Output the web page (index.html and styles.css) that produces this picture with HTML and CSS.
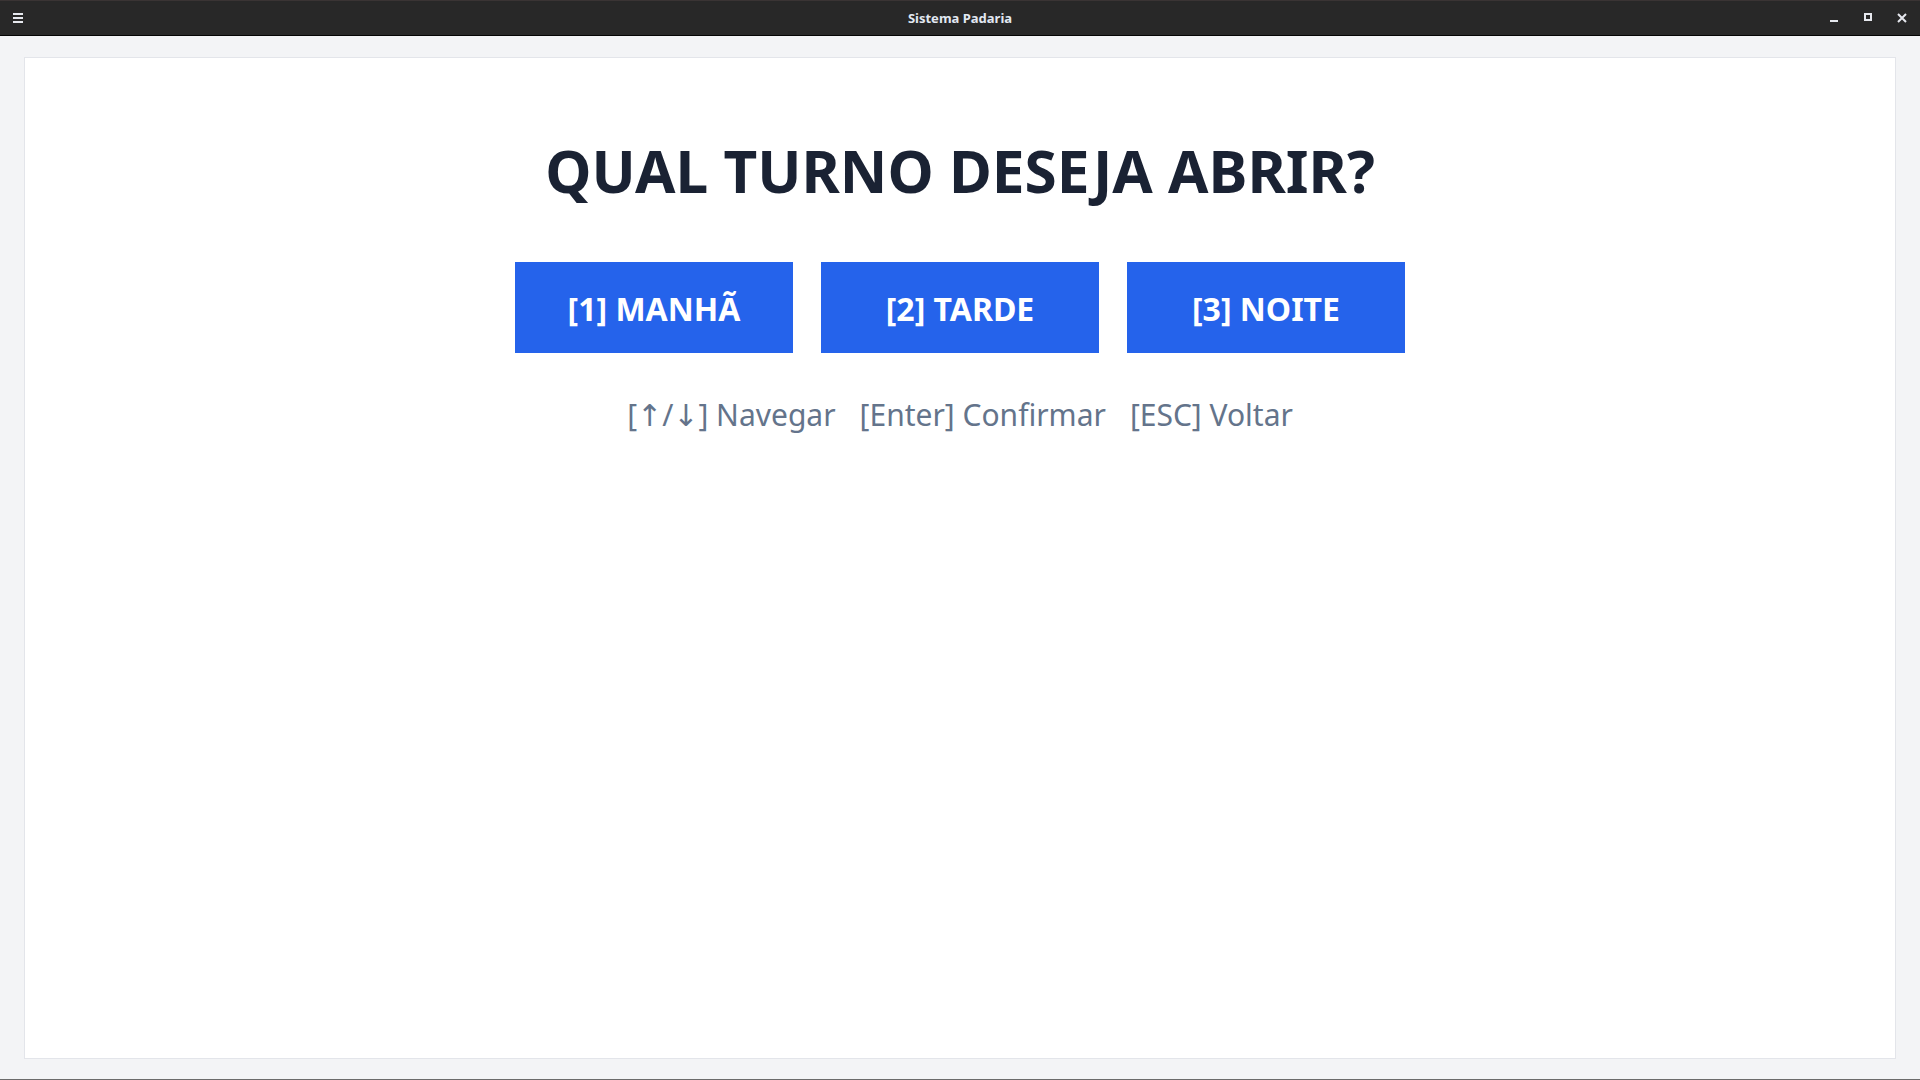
FILE: index.html
```html
<!DOCTYPE html>
<html lang="pt-BR">
<head>
<meta charset="utf-8">
<title>Sistema Padaria</title>
<link rel="stylesheet" href="styles.css">
</head>
<body>
<div class="window">
  <header class="titlebar">
    <div class="tb-left">
      <svg class="menu-icon" width="12" height="12" viewBox="0 0 12 12">
        <rect x="1" y="1" width="10" height="2" fill="#e6e8ee"/>
        <rect x="1" y="5" width="10" height="2" fill="#e6e8ee"/>
        <rect x="1" y="9" width="10" height="2" fill="#e6e8ee"/>
      </svg>
    </div>
    <div class="tb-title">Sistema Padaria</div>
    <div class="tb-right">
      <svg class="ctl" width="10" height="10" viewBox="0 0 10 10"><rect x="1" y="7" width="8" height="2" fill="#e6e8ee"/></svg>
      <svg class="ctl" width="10" height="10" viewBox="0 0 10 10"><rect x="2" y="1" width="6" height="6" fill="none" stroke="#e6e8ee" stroke-width="2"/></svg>
      <svg class="ctl" width="10" height="10" viewBox="0 0 10 10"><path d="M1 1 L9 9 M9 1 L1 9" stroke="#e6e8ee" stroke-width="2"/></svg>
    </div>
  </header>
  <main class="content">
    <section class="card">
      <h1 class="heading">QUAL TURNO DESEJA ABRIR?</h1>
      <div class="options">
        <button class="option">[1] MANHÃ</button>
        <button class="option">[2] TARDE</button>
        <button class="option">[3] NOITE</button>
      </div>
      <div class="hints">
        <span class="hint">[<span class="arrow">↑</span>/<span class="arrow">↓</span>] Navegar</span>
        <span class="hint">[Enter] Confirmar</span>
        <span class="hint">[ESC] Voltar</span>
      </div>
    </section>
  </main>
</div>
</body>
</html>
```
FILE: styles.css
```css
* { box-sizing: border-box; }
html, body {
  margin: 0;
  padding: 0;
  width: 1920px;
  height: 1080px;
  overflow: hidden;
  font-family: "Noto Sans", "Open Sans", sans-serif;
}
.window {
  display: flex;
  flex-direction: column;
  height: 1080px;
  background: #f3f4f6;
  border-bottom: 1px solid #6b6b6b;
}
.titlebar {
  height: 36px;
  flex: 0 0 36px;
  background: #282828;
  border-top: 1px solid #3a3434;
  border-bottom: 1px solid #050505;
  display: grid;
  grid-template-columns: 1fr auto 1fr;
  align-items: center;
}
.tb-left {
  display: flex;
  align-items: center;
  padding-left: 12px;
}
.menu-icon { display: block; }
.tb-title {
  color: #e2e8f2;
  font-weight: 700;
  font-size: 13px;
}
.tb-right {
  display: flex;
  justify-content: flex-end;
  align-items: center;
  gap: 24px;
  padding-right: 13px;
}
.ctl { display: block; }
.content {
  flex: 1;
  padding: 21px 24px 20px;
  display: flex;
}
.card {
  flex: 1;
  background: #ffffff;
  border: 1px solid #e3e5ea;
  display: flex;
  flex-direction: column;
  align-items: center;
  padding-top: 76px;
}
.heading {
  margin: 0;
  font-size: 58.5px;
  line-height: 72px;
  font-weight: 700;
  color: #1a2233;
}
.options {
  display: flex;
  gap: 28px;
  margin-top: 56px;
}
.option {
  width: 278px;
  height: 91px;
  border: none;
  background: #2563eb;
  color: #ffffff;
  font-family: "Noto Sans", "Open Sans", sans-serif;
  font-weight: 700;
  font-size: 32px;
  padding: 2px 0 0;
  display: flex;
  align-items: center;
  justify-content: center;
}
.hints {
  display: flex;
  gap: 24px;
  margin-top: 40px;
  color: #64748b;
  font-size: 30px;
  line-height: 44px;
}
.arrow {
  font-family: "DejaVu Sans", sans-serif;
  font-size: 30px;
}
```
